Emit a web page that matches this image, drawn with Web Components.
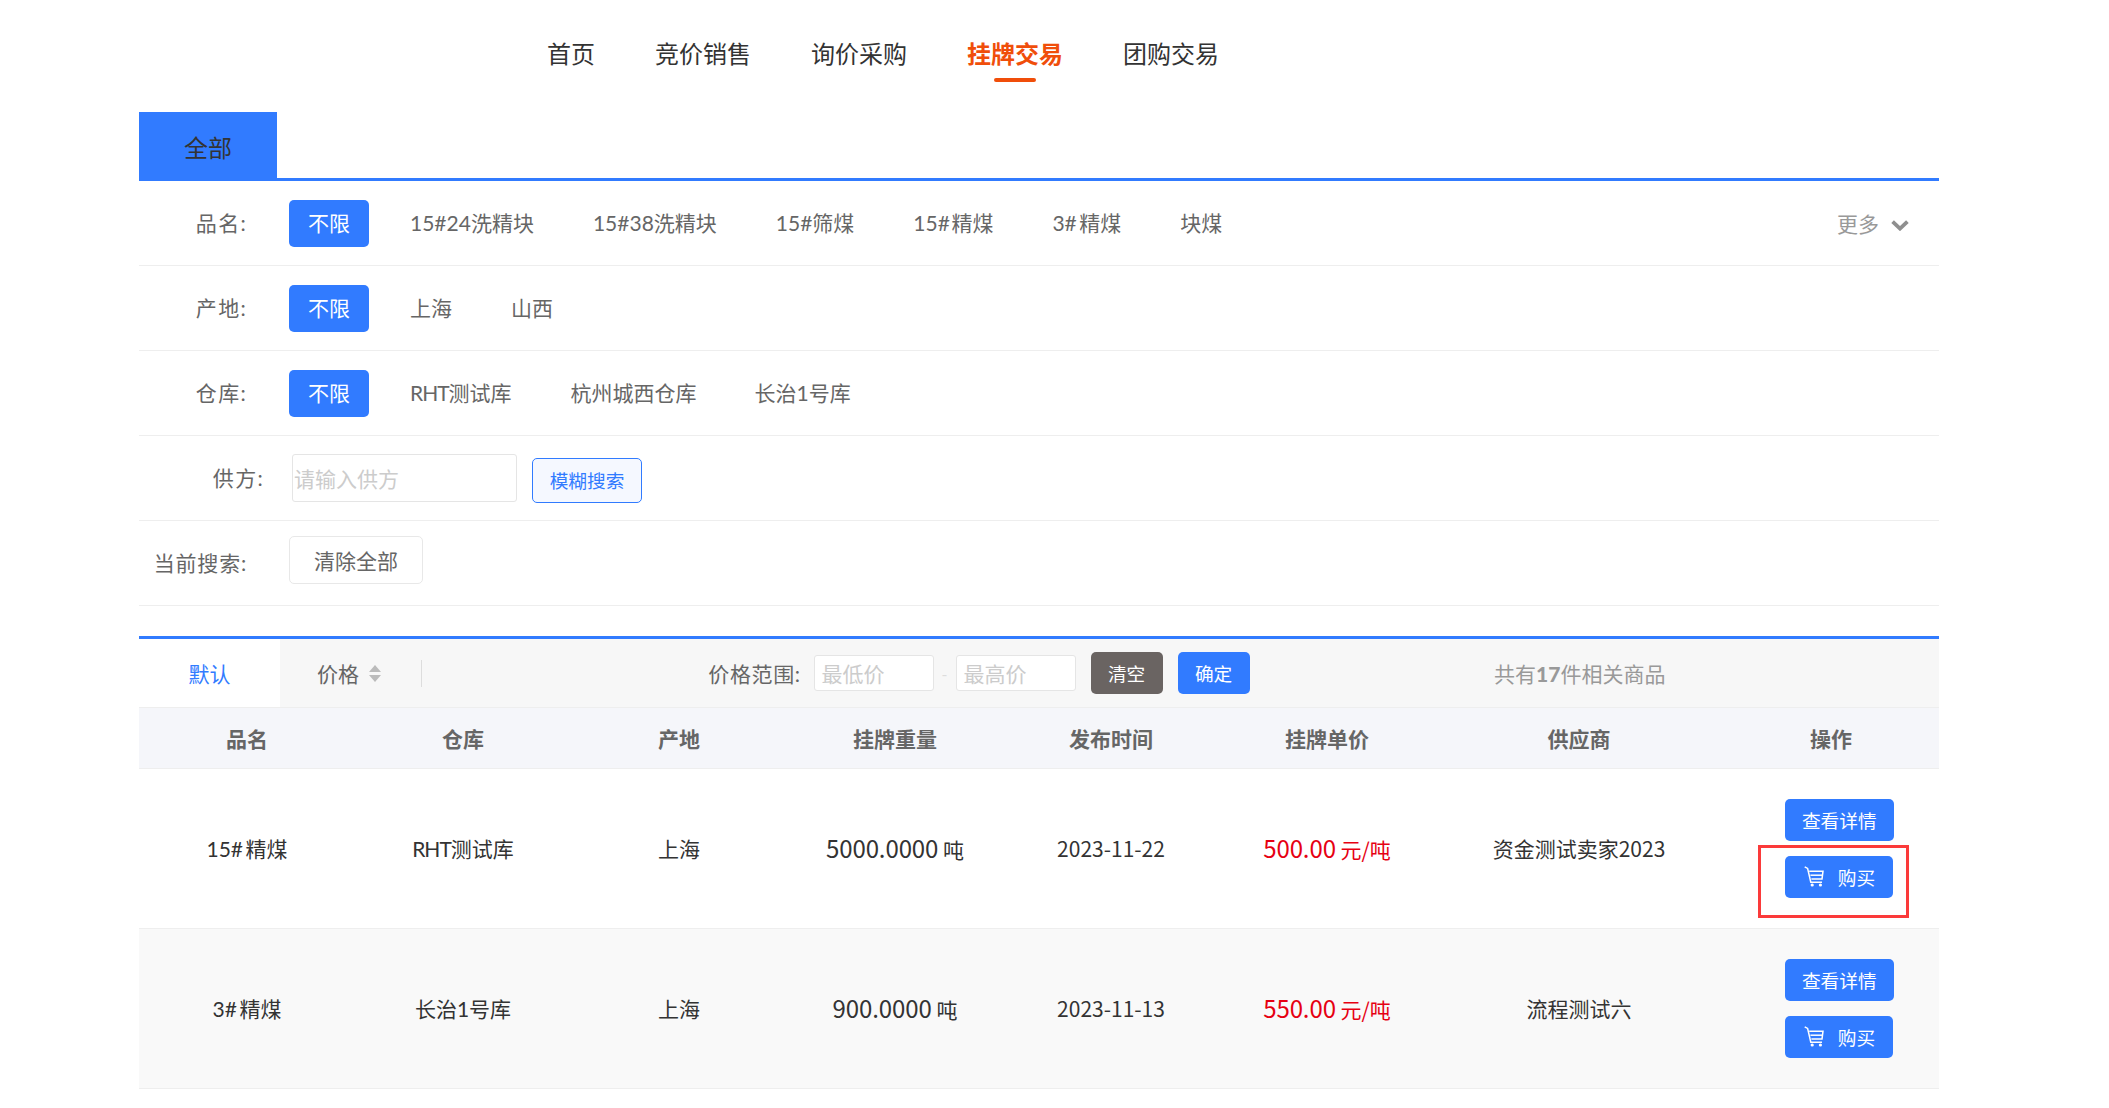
<!DOCTYPE html>
<html lang="zh-CN"><head><meta charset="utf-8"><title>挂牌交易</title>
<style>
html,body{margin:0;padding:0;background:#fff}
body{font-family:Lato,"Noto Sans CJK SC","Noto Sans",sans-serif;font-size:21px;color:#333;width:2109px;overflow:hidden}
</style></head><body>
<app-page></app-page>
<template id="t-nav"><style>
:host{display:flex;height:112px;box-sizing:border-box;padding-left:547px;gap:60px;font-size:24px}
a{position:relative;display:block;line-height:32px;padding-top:38px;color:#333;height:42px}
a.on{color:#f04e0a;font-weight:700}
a.on::after{content:"";position:absolute;left:27px;top:78px;width:42px;height:4px;border-radius:2px;background:#f04e0a}
</style><a>首页</a><a>竞价销售</a><a>询价采购</a><a class="on">挂牌交易</a><a>团购交易</a></template>
<template id="t-row"><style>
:host{display:flex;align-items:center;height:85px;box-sizing:border-box;border-bottom:1.33px solid #eee;font-size:21px;color:#666}
.lab{flex:none;width:108px;text-align:right;margin-right:42px;white-space:nowrap;line-height:30px;letter-spacing:1.3px}
.opts{display:flex;align-items:center;gap:23px;flex:1}
:host([wide]) .lab{width:125px;margin-right:28px}
:host([low]) .lab{letter-spacing:.8px}
</style><div class="lab"><slot name="label"></slot></div><div class="opts"><slot></slot></div><slot name="end"></slot></template>
<template id="t-opt"><style>
:host{display:block;padding:0 18px;line-height:46px;height:47px;white-space:nowrap;color:#666;border-radius:5px}
:host([on]){background:#317bff;color:#fff;width:44px;text-align:center}
</style><slot></slot></template>
<template id="t-btn"><style>
:host{display:inline-flex;align-items:center;justify-content:center;box-sizing:border-box;border-radius:5px;white-space:nowrap}
:host([kind=primary]){background:#317bff;color:#fff;height:42px;font-size:18.67px;padding-bottom:1px}
:host([kind=dark]){background:#6a6462;color:#fff;width:72px;height:42px;font-size:18.67px;padding-bottom:1px}
:host([kind=ghost]){background:#f5f8ff;color:#317bff;border:1.33px solid #317bff;width:110px;height:45px;font-size:18.67px;padding-bottom:2px}
:host([kind=plain]){background:#fff;color:#666;border:1.33px solid #e8e8e8;width:134px;height:48px;font-size:21px;padding-bottom:1px}
</style><slot></slot></template>
<template id="t-input"><style>
:host{display:block;box-sizing:border-box;border:1.33px solid #e5e5e5;border-radius:3px;background:#fff;color:#ccc;white-space:nowrap;font-size:21px}
</style><slot></slot></template>
<template id="t-toolbar"><style>
:host{display:flex;align-items:center;height:72px;box-sizing:border-box;border-top:3px solid #317bff;background:#f7f7f7;font-size:21px;color:#666;border-bottom:1.33px solid #eee;margin-top:30px}
.def{flex:none;width:141px;height:100%;background:#fff;color:#317bff;display:flex;align-items:center;justify-content:center;box-sizing:border-box}
.price{flex:none;display:flex;align-items:center;gap:10px;margin-left:37px;height:27px}
.div{flex:none;width:1.33px;height:27px;background:#ddd;margin-left:40px}
.range{flex:none;display:flex;align-items:center;margin-left:286px}
.range>span:first-child{letter-spacing:.6px}
.dash{color:#ddd;width:22px;text-align:center;font-size:16px}
.g{margin-left:13px;width:120px;height:36px;line-height:36px;padding-left:7px;box-sizing:border-box}
.g2{margin-left:0}
.acts{display:flex;gap:15px;margin-left:15px}
.count{flex:1;text-align:center;color:#999;padding-left:157px;white-space:nowrap;margin-right:186px}
.count b{font-weight:900}
</style><div class="def">默认</div><div class="price"><span>价格</span><svg width="12" height="17" viewBox="0 0 12 17"><path d="M6 0 12 7H0Z" fill="#bbb"/><path d="M6 17 0 10h12Z" fill="#bbb"/></svg></div><div class="div"></div>
<div class="range"><span>价格范围:</span><x-input class="g">最低价</x-input><span class="dash">-</span><x-input class="g g2">最高价</x-input><div class="acts"><x-btn kind="dark">清空</x-btn><x-btn kind="primary" style="width:72px">确定</x-btn></div></div>
<div class="count">共有<b>17</b>件相关商品</div></template>
<template id="t-tr"><style>
:host{display:grid;grid-template-columns:repeat(6,216px) 288px 216px;align-items:center;box-sizing:border-box;border-bottom:1.33px solid #eee;text-align:center;height:160px;color:#333;font-size:21px}
:host([head]){height:60.5px;background:#f5f6fa;font-weight:700;color:#666}
:host([alt]){background:#f9f9f9}
</style><slot></slot></template>
<template id="t-qty"><style>
:host{display:block;font-size:21px;color:#333;white-space:nowrap;font-family:"Noto Sans CJK SC","Noto Sans",sans-serif;padding-bottom:1px}
.n{font-size:24px;letter-spacing:-.1px}
:host([price]){color:#e60012}
</style><span class="n"><slot></slot></span> <slot name="u"></slot></template>
<template id="t-ops"><style>
:host{display:flex;flex-direction:column;align-items:flex-start;gap:15px;padding-left:62px;position:relative}
.a{width:108.5px}
.b{width:107.5px;gap:13px;padding-left:1.5px;box-sizing:border-box}
svg{flex:none}
</style><x-btn kind="primary" class="a">查看详情</x-btn><x-btn kind="primary" class="b"><svg width="21" height="21" viewBox="0 0 21 21" fill="none" stroke="#fff" stroke-width="1.5"><path d="M.7 .8 3.6 2.4 6.8 16.2H18"/><path d="M5.2 5.2H19L18 13H7.4"/><path d="M6.4 9.2H18.4"/><circle cx="8.2" cy="19" r="1.6" fill="#fff" stroke="none"/><circle cx="16.4" cy="19" r="1.6" fill="#fff" stroke="none"/></svg><span>购买</span></x-btn><slot></slot></template>
<template id="t-mark"><style>
:host{position:absolute;left:35px;top:46px;width:151px;height:73px;box-sizing:border-box;border:3px solid #fb3a3a}
</style></template>
<template id="t-page"><style>
:host{display:block}
.wrap{width:1800px;margin-left:139px}
.tabs{border-bottom:3px solid #317bff;display:flex;height:66px}
.tab{width:138px;height:69px;background:#317bff;color:#333;font-size:24px;line-height:71px;text-align:center}
.r{letter-spacing:-1px}
.h{letter-spacing:1.5px}
.h3{letter-spacing:2.5px}
.cn{font-family:"Noto Sans CJK SC","Noto Sans",sans-serif}
</style><x-nav></x-nav><div class="wrap">
<div class="tabs"><div class="tab">全部</div></div>
<x-row><span slot="label">品名:</span><x-opt on>不限</x-opt><x-opt>15#24洗精块</x-opt><x-opt>15#38洗精块</x-opt><x-opt>15#筛煤</x-opt><x-opt>15<span class="h">#</span>精煤</x-opt><x-opt>3<span class="h3">#</span>精煤</x-opt><x-opt>块煤</x-opt><x-more slot="end"></x-more></x-row>
<x-row><span slot="label">产地:</span><x-opt on>不限</x-opt><x-opt>上海</x-opt><x-opt>山西</x-opt></x-row>
<x-row><span slot="label">仓库:</span><x-opt on>不限</x-opt><x-opt><span class="r">RHT</span>测试库</x-opt><x-opt>杭州城西仓库</x-opt><x-opt style="margin-left:-1px">长治1号库</x-opt></x-row>
<x-row wide><span slot="label">供方:</span><x-input style="width:225px;height:48px;line-height:48px;padding-left:1px">请输入供方</x-input><x-btn kind="ghost" style="margin-left:-8px;margin-top:5px">模糊搜索</x-btn></x-row>
<x-row low><span slot="label">当前搜索:</span><x-btn kind="plain" style="margin-top:-6px">清除全部</x-btn></x-row>
<x-toolbar></x-toolbar>
<x-tr head><div>品名</div><div>仓库</div><div>产地</div><div>挂牌重量</div><div>发布时间</div><div>挂牌单价</div><div>供应商</div><div>操作</div></x-tr>
<x-tr><div>15<span class="h3">#</span>精煤</div><div><span class="r">RHT</span>测试库</div><div>上海</div><x-qty>5000.0000<span slot="u">吨</span></x-qty><div class="cn">2023-11-22</div><x-qty price>500.00<span slot="u">元/吨</span></x-qty><div class="cn">资金测试卖家2023</div><x-ops><x-mark></x-mark></x-ops></x-tr>
<x-tr alt><div>3<span class="h3">#</span>精煤</div><div>长治1号库</div><div>上海</div><x-qty>900.0000<span slot="u">吨</span></x-qty><div class="cn">2023-11-13</div><x-qty price>550.00<span slot="u">元/吨</span></x-qty><div>流程测试六</div><x-ops></x-ops></x-tr>
</div></template>
<template id="t-more"><style>
:host{display:flex;align-items:center;gap:12px;color:#999;margin-right:30px;font-size:21px}
svg{margin-top:5px}
</style><span>更多</span><svg width="18" height="11" viewBox="0 0 18 11"><path d="M1.6 1.6 9 8.6 16.4 1.6" fill="none" stroke="#8f8f8f" stroke-width="3.8"/></svg></template>
<script>
const reg=(n,t)=>customElements.define(n,class extends HTMLElement{constructor(){super();this.attachShadow({mode:"open"}).appendChild(document.getElementById(t).content.cloneNode(true))}});
[["x-nav","t-nav"],["x-row","t-row"],["x-opt","t-opt"],["x-btn","t-btn"],["x-input","t-input"],["x-toolbar","t-toolbar"],["x-tr","t-tr"],["x-qty","t-qty"],["x-ops","t-ops"],["x-mark","t-mark"],["x-more","t-more"],["app-page","t-page"]].forEach(a=>reg(a[0],a[1]));
</script></body></html>
